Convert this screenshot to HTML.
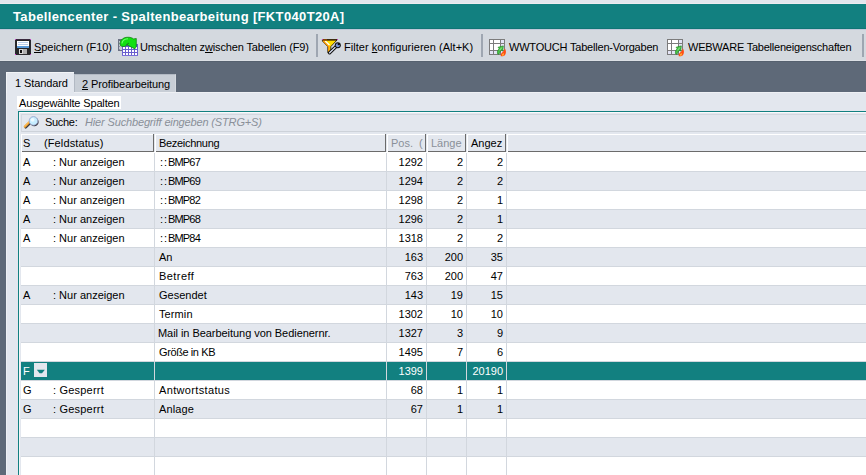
<!DOCTYPE html>
<html><head><meta charset="utf-8">
<style>
*{margin:0;padding:0;box-sizing:border-box}
html,body{width:866px;height:475px;overflow:hidden;background:#5E6978;font-family:"Liberation Sans",sans-serif;font-size:11px;color:#000}
.a{position:absolute}
.t{position:absolute;white-space:nowrap;line-height:12px;height:12px}
</style></head><body>

<div class="a" style="left:0;top:0;width:866px;height:4px;background:#E2E6ED"></div>
<div class="a" style="left:0;top:3px;width:866px;height:1px;background:#ECEBF0"></div>
<div class="a" style="left:0;top:4px;width:866px;height:25px;background:#128080"></div>
<div class="a" style="left:0;top:28px;width:866px;height:1px;background:#0F7575"></div>
<div class="t" style="left:13px;top:10px;font-size:13px;line-height:14px;height:14px;font-weight:bold;color:#fff;letter-spacing:0.35px">Tabellencenter - Spaltenbearbeitung [FKT040T20A]</div>
<div class="a" style="left:0;top:29px;width:866px;height:32px;background:#D4D9DF"></div>
<div class="a" style="left:0;top:29px;width:866px;height:1px;background:#BFC8DA"></div>
<div class="a" style="left:0;top:60px;width:866px;height:1px;background:#DCE0E5"></div>
<div class="a" style="left:0;top:61px;width:866px;height:1px;background:#56616F"></div>
<div class="a" style="left:316px;top:34px;width:2px;height:23px;background:#9EA6B1"></div>
<div class="a" style="left:481px;top:34px;width:2px;height:23px;background:#9EA6B1"></div>
<div class="a" style="left:862px;top:34px;width:2px;height:23px;background:#9EA6B1"></div>
<div class="t" style="left:34px;top:41px;letter-spacing:-0.06px"><u>S</u>peichern (F10)</div>
<div class="t" style="left:140px;top:41px;letter-spacing:-0.14px">Umschalten z<u>w</u>ischen Tabellen (F9)</div>
<div class="t" style="left:344px;top:41px;letter-spacing:0.04px">Filter <u>k</u>onfigurieren (Alt+K)</div>
<div class="t" style="left:509px;top:41px;letter-spacing:-0.2px">WWTOUCH Tabellen-Vorgaben</div>
<div class="t" style="left:688px;top:41px;letter-spacing:-0.23px">WEBWARE Tabelleneigenschaften</div>
<svg class="a" style="left:15px;top:39px" width="16" height="16" viewBox="0 0 16 16" shape-rendering="crispEdges"><rect x="0" y="0" width="16" height="16" fill="#2A2A2E"/><rect x="0" y="0" width="16" height="1" fill="#3A2A3E"/><rect x="1" y="1" width="14" height="14" fill="#262628"/><rect x="2" y="2" width="12" height="5" fill="#FFFFFF"/><rect x="3" y="3" width="10" height="1" fill="#B8CDE8"/><rect x="3" y="5" width="10" height="1" fill="#B8CDE8"/><rect x="2" y="7" width="12" height="2" fill="#5A9AD8"/><rect x="4" y="10" width="8" height="5" fill="#D8D8D8"/><rect x="8" y="10" width="4" height="5" fill="#B0B0B0"/><rect x="5" y="11" width="2" height="3" fill="#111"/><rect x="0" y="0" width="1" height="1" fill="#C040C0"/><rect x="15" y="0" width="1" height="1" fill="#C040C0"/><rect x="0" y="15" width="1" height="1" fill="#E020E0"/><rect x="15" y="15" width="1" height="1" fill="#C040C0"/></svg>
<svg class="a" style="left:116px;top:35px" width="24" height="24" viewBox="0 0 24 24" shape-rendering="crispEdges"><rect x="2" y="4" width="11" height="12" fill="#6C7284"/><rect x="3" y="6" width="9" height="9" fill="#C4C8D4"/><rect x="3" y="8" width="1" height="1" fill="#8A90A0"/><rect x="3" y="11" width="1" height="1" fill="#8A90A0"/><rect x="3" y="14" width="1" height="1" fill="#8A90A0"/><rect x="6" y="8" width="1" height="1" fill="#8A90A0"/><rect x="6" y="11" width="1" height="1" fill="#8A90A0"/><rect x="6" y="14" width="1" height="1" fill="#8A90A0"/><rect x="9" y="8" width="1" height="1" fill="#8A90A0"/><rect x="9" y="11" width="1" height="1" fill="#8A90A0"/><rect x="9" y="14" width="1" height="1" fill="#8A90A0"/><rect x="6" y="9" width="16" height="12" fill="#6A5ECF"/><rect x="6" y="20" width="16" height="1" fill="#7A70D8"/><rect x="7" y="12" width="2" height="2" fill="#FFFFFF"/><rect x="7" y="15" width="2" height="2" fill="#FFFFFF"/><rect x="7" y="18" width="2" height="2" fill="#FFFFFF"/><rect x="10" y="12" width="2" height="2" fill="#FFFFFF"/><rect x="10" y="15" width="2" height="2" fill="#FFFFFF"/><rect x="10" y="18" width="2" height="2" fill="#FFFFFF"/><rect x="13" y="12" width="2" height="2" fill="#FFFFFF"/><rect x="13" y="15" width="2" height="2" fill="#FFFFFF"/><rect x="13" y="18" width="2" height="2" fill="#FFFFFF"/><rect x="16" y="12" width="2" height="2" fill="#FFFFFF"/><rect x="16" y="15" width="2" height="2" fill="#FFFFFF"/><rect x="16" y="18" width="2" height="2" fill="#FFFFFF"/><rect x="19" y="12" width="2" height="2" fill="#FFFFFF"/><rect x="19" y="15" width="2" height="2" fill="#FFFFFF"/><rect x="19" y="18" width="2" height="2" fill="#FFFFFF"/><path d="M4.6 10.8 C3.6 9 4 5.6 6.6 3.8 C8.6 2.3 11.5 2 14 2.4 C15.6 2.7 16.8 3.2 17.6 3.9 L20.3 3.5 L20.3 11.6 L18.8 13.9 L10.9 9.8 L12.6 8.3 C11.6 8.1 10.6 8.8 10.3 10.6 C9.4 11.4 8.2 11.6 7 11.5 C5.9 11.4 5.1 11.2 4.6 10.8 Z" fill="#12E012" stroke="#0A780A" stroke-width="0.7" shape-rendering="auto"/><path d="M6 8.5 C6.2 5.8 8.5 4 12 3.8" stroke="#70FF70" stroke-width="1.1" fill="none" shape-rendering="auto"/></svg>
<svg class="a" style="left:320px;top:36px" width="24" height="22" viewBox="0 0 24 22" shape-rendering="crispEdges"><path d="M2.4 3.6 L17.4 3.6 L10.8 10.6 L10.8 15.4 L7.8 16.8 L7.8 10.6 L2.4 5 Z" fill="#FFDC00" stroke="#1A0C00" stroke-width="0.8" shape-rendering="auto"/><path d="M3.4 5 L8.8 10.6 L8.8 15.6" stroke="#FF9400" stroke-width="1.3" fill="none" shape-rendering="auto"/><path d="M5.2 5 L9.4 9" stroke="#FFFFF0" stroke-width="1.5" shape-rendering="auto"/><path d="M3 4 L17 4" stroke="#2A1400" stroke-width="1.1" shape-rendering="auto"/><path d="M3 4 L7 4" stroke="#B85A00" stroke-width="1.1" shape-rendering="auto"/><rect x="2" y="3" width="1" height="1" fill="#C040C0"/><rect x="17" y="3" width="1" height="1" fill="#C040C0"/><path d="M9.6 16.8 L16 10.6" stroke="#101010" stroke-width="3.4" stroke-linecap="round" shape-rendering="auto"/><path d="M9.6 16.8 L16 10.6" stroke="#DCE4F4" stroke-width="1.3" stroke-linecap="round" shape-rendering="auto"/><circle cx="17.8" cy="9.2" r="3" fill="#101010" shape-rendering="auto"/><circle cx="17.8" cy="9.2" r="2" fill="#7896D8" shape-rendering="auto"/><circle cx="18.8" cy="8.1" r="1.2" fill="#101010" shape-rendering="auto"/></svg>
<svg class="a" style="left:489px;top:39px" width="18" height="18" viewBox="0 0 18 18" shape-rendering="crispEdges"><rect x="0" y="0" width="16" height="16" fill="#7C7C7C"/><rect x="1" y="1" width="3" height="3" fill="#FFF"/><rect x="5" y="1" width="6" height="3" fill="#FFF"/><rect x="12" y="1" width="3" height="3" fill="#E4E4F6"/><rect x="1" y="5" width="3" height="6" fill="#FFF"/><rect x="5" y="5" width="6" height="6" fill="#FFF"/><rect x="12" y="5" width="3" height="6" fill="#E4E4F6"/><rect x="1" y="12" width="3" height="3" fill="#E4E4F6"/><rect x="5" y="12" width="6" height="3" fill="#E4E4F6"/><rect x="12" y="12" width="3" height="3" fill="#E4E4F6"/><path d="M8.6 14.8 C8.1 12.6 8.8 11 10.2 9.8 L9.1 8.3 L14.3 6.9 L13.7 12.1 L12.5 11.1 C11.5 12.2 10.6 13.4 9.9 15.2 Z" fill="#48C448" stroke="#1C861C" stroke-width="0.7" shape-rendering="auto"/><path d="M10.6 11.2 L12.8 8.6" stroke="#90F090" stroke-width="1" shape-rendering="auto"/><path d="M11.8 17.2 C11.2 15.4 12.4 13.8 13.9 12.7 C14.9 11.9 15.5 10.8 15.7 9.3 C17.1 10.9 17.4 13.6 16.3 15.6 C15.7 16.7 14.8 17.3 13.9 17.3 Z" fill="#FF4E12" shape-rendering="auto"/><path d="M12.9 16.6 C12.8 15.3 13.7 14.6 14.6 13.9 C15.1 15 14.9 16.1 14.2 16.8 Z" fill="#FFB838" shape-rendering="auto"/></svg>
<svg class="a" style="left:667px;top:39px" width="18" height="18" viewBox="0 0 18 18" shape-rendering="crispEdges"><rect x="0" y="0" width="16" height="16" fill="#7C7C7C"/><rect x="1" y="1" width="3" height="3" fill="#FFF"/><rect x="5" y="1" width="6" height="3" fill="#FFF"/><rect x="12" y="1" width="3" height="3" fill="#E4E4F6"/><rect x="1" y="5" width="3" height="6" fill="#FFF"/><rect x="5" y="5" width="6" height="6" fill="#FFF"/><rect x="12" y="5" width="3" height="6" fill="#E4E4F6"/><rect x="1" y="12" width="3" height="3" fill="#E4E4F6"/><rect x="5" y="12" width="6" height="3" fill="#E4E4F6"/><rect x="12" y="12" width="3" height="3" fill="#E4E4F6"/><path d="M8.6 14.8 C8.1 12.6 8.8 11 10.2 9.8 L9.1 8.3 L14.3 6.9 L13.7 12.1 L12.5 11.1 C11.5 12.2 10.6 13.4 9.9 15.2 Z" fill="#48C448" stroke="#1C861C" stroke-width="0.7" shape-rendering="auto"/><path d="M10.6 11.2 L12.8 8.6" stroke="#90F090" stroke-width="1" shape-rendering="auto"/><path d="M11.8 17.2 C11.2 15.4 12.4 13.8 13.9 12.7 C14.9 11.9 15.5 10.8 15.7 9.3 C17.1 10.9 17.4 13.6 16.3 15.6 C15.7 16.7 14.8 17.3 13.9 17.3 Z" fill="#FF4E12" shape-rendering="auto"/><path d="M12.9 16.6 C12.8 15.3 13.7 14.6 14.6 13.9 C15.1 15 14.9 16.1 14.2 16.8 Z" fill="#FFB838" shape-rendering="auto"/></svg>
<div class="a" style="left:6px;top:92px;width:860px;height:383px;background:#E3E7EE"></div>
<div class="a" style="left:6px;top:92px;width:860px;height:1px;background:#EEF0F4"></div>
<div class="a" style="left:6px;top:92px;width:1px;height:383px;background:#EEF0F4"></div>
<div class="a" style="left:74px;top:74px;width:102px;height:18px;background:#C8CED6;border-top:1px solid #B2B9C3;border-left:1px solid #B2B9C3;border-right:1px solid #D4D8DE"></div>
<div class="a" style="left:6px;top:72px;width:68px;height:21px;background:#E3E7EE;border-top:1px solid #F2F4F7;border-left:1px solid #F2F4F7"></div>
<div class="t" style="left:15px;top:77px;letter-spacing:-0.1px">1 Standard</div>
<div class="t" style="left:82px;top:78px;letter-spacing:-0.1px"><u>2</u> Profibearbeitung</div>
<div class="a" style="left:17px;top:96px;width:104px;height:13px;background:#fff"></div>
<div class="t" style="left:19px;top:97px;letter-spacing:-0.15px">Ausgewählte Spalten</div>
<div class="a" style="left:18px;top:111px;width:848px;height:364px;background:#E3E7EE;border-left:1px solid #128080;border-top:1px solid #128080"></div>
<div class="a" style="left:19px;top:112px;width:847px;height:1px;background:#FAFAFC"></div>
<div class="a" style="left:19px;top:112px;width:1px;height:363px;background:#F4F5F8"></div>
<div class="a" style="left:21px;top:114px;width:845px;height:18px;background:#E3E7EE;border-left:1px solid #D3D8DF;border-top:1px solid #D3D8DF;border-bottom:1px solid #CDD2D9"></div>
<div class="t" style="left:45px;top:116px;letter-spacing:-0.3px">Suche:</div>
<div class="t" style="left:85px;top:116px;letter-spacing:-0.15px;font-style:italic;color:#8A9099">Hier Suchbegriff eingeben (STRG+S)</div>
<svg class="a" style="left:23px;top:113px" width="16" height="16" viewBox="0 0 16 16" shape-rendering="crispEdges"><path d="M1.8 13.6 L6.2 9.2" stroke="#3A3A42" stroke-width="2.4" stroke-linecap="round" shape-rendering="auto" transform="translate(0.9,0.9)"/><path d="M1.8 13.6 L6.2 9.2" stroke="#F4A432" stroke-width="2.2" stroke-linecap="round" shape-rendering="auto"/><path d="M1.6 13 L5.6 9" stroke="#FFD080" stroke-width="0.8" stroke-linecap="round" shape-rendering="auto"/><circle cx="11.3" cy="8.9" r="4.3" fill="#34343C" shape-rendering="auto"/><circle cx="10.5" cy="7.9" r="4.3" fill="#C6EDFF" stroke="#9AA6CC" stroke-width="0.9" shape-rendering="auto"/><circle cx="9.6" cy="6.8" r="1.9" fill="#EEFAFF" shape-rendering="auto"/></svg>
<div class="a" style="left:21px;top:134px;width:133px;height:18px;background:#E3E7EE;border-top:1px solid #fff;border-left:1px solid #fff"></div>
<div class="a" style="left:22px;top:151px;width:132px;height:1px;background:#6B6B6B"></div>
<div class="a" style="left:153px;top:134px;width:1px;height:19px;background:#6B6B6B"></div>
<div class="a" style="left:155px;top:134px;width:231px;height:18px;background:#E3E7EE;border-top:1px solid #fff;border-left:1px solid #fff"></div>
<div class="a" style="left:156px;top:151px;width:230px;height:1px;background:#6B6B6B"></div>
<div class="a" style="left:385px;top:134px;width:1px;height:19px;background:#6B6B6B"></div>
<div class="a" style="left:387px;top:134px;width:39px;height:18px;background:#E3E7EE;border-top:1px solid #fff;border-left:1px solid #fff"></div>
<div class="a" style="left:388px;top:151px;width:38px;height:1px;background:#6B6B6B"></div>
<div class="a" style="left:425px;top:134px;width:1px;height:19px;background:#6B6B6B"></div>
<div class="a" style="left:427px;top:134px;width:39px;height:18px;background:#E3E7EE;border-top:1px solid #fff;border-left:1px solid #fff"></div>
<div class="a" style="left:428px;top:151px;width:38px;height:1px;background:#6B6B6B"></div>
<div class="a" style="left:465px;top:134px;width:1px;height:19px;background:#6B6B6B"></div>
<div class="a" style="left:467px;top:134px;width:39px;height:18px;background:#E3E7EE;border-top:1px solid #fff;border-left:1px solid #fff"></div>
<div class="a" style="left:468px;top:151px;width:38px;height:1px;background:#6B6B6B"></div>
<div class="a" style="left:505px;top:134px;width:1px;height:19px;background:#6B6B6B"></div>
<div class="a" style="left:507px;top:134px;width:359px;height:18px;background:#E3E7EE;border-top:1px solid #fff;border-left:1px solid #fff"></div>
<div class="a" style="left:508px;top:151px;width:358px;height:1px;background:#6B6B6B"></div>
<div class="t" style="left:23px;top:137px">S</div>
<div class="t" style="left:44px;top:137px;letter-spacing:0.12px">(Feldstatus)</div>
<div class="t" style="left:159px;top:137px;letter-spacing:-0.3px">Bezeichnung</div>
<div class="t" style="left:391px;top:137px;color:#8A9099;width:32px;overflow:hidden">Pos.&nbsp;&nbsp;(Byte)</div>
<div class="t" style="left:431px;top:137px;color:#8A9099">Länge</div>
<div class="t" style="left:471px;top:137px">Angez</div>
<div class="a" style="left:21px;top:152px;width:845px;height:19px;background:#D2D7DE"></div>
<div class="a" style="left:21px;top:152px;width:845px;height:1px;background:#FFFFFF"></div>
<div class="a" style="left:21px;top:153px;width:133px;height:18px;background:#FFFFFF"></div>
<div class="a" style="left:155px;top:153px;width:231px;height:18px;background:#FFFFFF"></div>
<div class="a" style="left:387px;top:153px;width:39px;height:18px;background:#FFFFFF"></div>
<div class="a" style="left:427px;top:153px;width:39px;height:18px;background:#FFFFFF"></div>
<div class="a" style="left:467px;top:153px;width:39px;height:18px;background:#FFFFFF"></div>
<div class="a" style="left:507px;top:153px;width:359px;height:18px;background:#FFFFFF"></div>
<div class="t" style="left:23px;top:156px">A</div>
<div class="t" style="left:53px;top:156px;letter-spacing:0px">: Nur anzeigen</div>
<div class="t" style="left:160px;top:156px;letter-spacing:-0.1px"><span style="letter-spacing:0.9px">::</span><span style="letter-spacing:-0.8px">BMP67</span></div>
<div class="t" style="left:423px;top:156px;transform:translateX(-100%)">1292</div>
<div class="t" style="left:463px;top:156px;transform:translateX(-100%)">2</div>
<div class="t" style="left:503px;top:156px;transform:translateX(-100%)">2</div>
<div class="a" style="left:21px;top:171px;width:845px;height:19px;background:#D2D7DE"></div>
<div class="a" style="left:21px;top:172px;width:133px;height:18px;background:#E3E7EE"></div>
<div class="a" style="left:155px;top:172px;width:231px;height:18px;background:#E3E7EE"></div>
<div class="a" style="left:387px;top:172px;width:39px;height:18px;background:#E3E7EE"></div>
<div class="a" style="left:427px;top:172px;width:39px;height:18px;background:#E3E7EE"></div>
<div class="a" style="left:467px;top:172px;width:39px;height:18px;background:#E3E7EE"></div>
<div class="a" style="left:507px;top:172px;width:359px;height:18px;background:#E3E7EE"></div>
<div class="t" style="left:23px;top:175px">A</div>
<div class="t" style="left:53px;top:175px;letter-spacing:0px">: Nur anzeigen</div>
<div class="t" style="left:160px;top:175px;letter-spacing:-0.1px"><span style="letter-spacing:0.9px">::</span><span style="letter-spacing:-0.8px">BMP69</span></div>
<div class="t" style="left:423px;top:175px;transform:translateX(-100%)">1294</div>
<div class="t" style="left:463px;top:175px;transform:translateX(-100%)">2</div>
<div class="t" style="left:503px;top:175px;transform:translateX(-100%)">2</div>
<div class="a" style="left:21px;top:190px;width:845px;height:19px;background:#D2D7DE"></div>
<div class="a" style="left:21px;top:191px;width:133px;height:18px;background:#FFFFFF"></div>
<div class="a" style="left:155px;top:191px;width:231px;height:18px;background:#FFFFFF"></div>
<div class="a" style="left:387px;top:191px;width:39px;height:18px;background:#FFFFFF"></div>
<div class="a" style="left:427px;top:191px;width:39px;height:18px;background:#FFFFFF"></div>
<div class="a" style="left:467px;top:191px;width:39px;height:18px;background:#FFFFFF"></div>
<div class="a" style="left:507px;top:191px;width:359px;height:18px;background:#FFFFFF"></div>
<div class="t" style="left:23px;top:194px">A</div>
<div class="t" style="left:53px;top:194px;letter-spacing:0px">: Nur anzeigen</div>
<div class="t" style="left:160px;top:194px;letter-spacing:-0.1px"><span style="letter-spacing:0.9px">::</span><span style="letter-spacing:-0.8px">BMP82</span></div>
<div class="t" style="left:423px;top:194px;transform:translateX(-100%)">1298</div>
<div class="t" style="left:463px;top:194px;transform:translateX(-100%)">2</div>
<div class="t" style="left:503px;top:194px;transform:translateX(-100%)">1</div>
<div class="a" style="left:21px;top:209px;width:845px;height:19px;background:#D2D7DE"></div>
<div class="a" style="left:21px;top:210px;width:133px;height:18px;background:#E3E7EE"></div>
<div class="a" style="left:155px;top:210px;width:231px;height:18px;background:#E3E7EE"></div>
<div class="a" style="left:387px;top:210px;width:39px;height:18px;background:#E3E7EE"></div>
<div class="a" style="left:427px;top:210px;width:39px;height:18px;background:#E3E7EE"></div>
<div class="a" style="left:467px;top:210px;width:39px;height:18px;background:#E3E7EE"></div>
<div class="a" style="left:507px;top:210px;width:359px;height:18px;background:#E3E7EE"></div>
<div class="t" style="left:23px;top:213px">A</div>
<div class="t" style="left:53px;top:213px;letter-spacing:0px">: Nur anzeigen</div>
<div class="t" style="left:160px;top:213px;letter-spacing:-0.1px"><span style="letter-spacing:0.9px">::</span><span style="letter-spacing:-0.8px">BMP68</span></div>
<div class="t" style="left:423px;top:213px;transform:translateX(-100%)">1296</div>
<div class="t" style="left:463px;top:213px;transform:translateX(-100%)">2</div>
<div class="t" style="left:503px;top:213px;transform:translateX(-100%)">1</div>
<div class="a" style="left:21px;top:228px;width:845px;height:19px;background:#D2D7DE"></div>
<div class="a" style="left:21px;top:229px;width:133px;height:18px;background:#FFFFFF"></div>
<div class="a" style="left:155px;top:229px;width:231px;height:18px;background:#FFFFFF"></div>
<div class="a" style="left:387px;top:229px;width:39px;height:18px;background:#FFFFFF"></div>
<div class="a" style="left:427px;top:229px;width:39px;height:18px;background:#FFFFFF"></div>
<div class="a" style="left:467px;top:229px;width:39px;height:18px;background:#FFFFFF"></div>
<div class="a" style="left:507px;top:229px;width:359px;height:18px;background:#FFFFFF"></div>
<div class="t" style="left:23px;top:232px">A</div>
<div class="t" style="left:53px;top:232px;letter-spacing:0px">: Nur anzeigen</div>
<div class="t" style="left:160px;top:232px;letter-spacing:-0.1px"><span style="letter-spacing:0.9px">::</span><span style="letter-spacing:-0.8px">BMP84</span></div>
<div class="t" style="left:423px;top:232px;transform:translateX(-100%)">1318</div>
<div class="t" style="left:463px;top:232px;transform:translateX(-100%)">2</div>
<div class="t" style="left:503px;top:232px;transform:translateX(-100%)">2</div>
<div class="a" style="left:21px;top:247px;width:845px;height:19px;background:#D2D7DE"></div>
<div class="a" style="left:21px;top:248px;width:133px;height:18px;background:#E3E7EE"></div>
<div class="a" style="left:155px;top:248px;width:231px;height:18px;background:#E3E7EE"></div>
<div class="a" style="left:387px;top:248px;width:39px;height:18px;background:#E3E7EE"></div>
<div class="a" style="left:427px;top:248px;width:39px;height:18px;background:#E3E7EE"></div>
<div class="a" style="left:467px;top:248px;width:39px;height:18px;background:#E3E7EE"></div>
<div class="a" style="left:507px;top:248px;width:359px;height:18px;background:#E3E7EE"></div>
<div class="t" style="left:159px;top:251px;letter-spacing:0px">An</div>
<div class="t" style="left:423px;top:251px;transform:translateX(-100%)">163</div>
<div class="t" style="left:463px;top:251px;transform:translateX(-100%)">200</div>
<div class="t" style="left:503px;top:251px;transform:translateX(-100%)">35</div>
<div class="a" style="left:21px;top:266px;width:845px;height:19px;background:#D2D7DE"></div>
<div class="a" style="left:21px;top:267px;width:133px;height:18px;background:#FFFFFF"></div>
<div class="a" style="left:155px;top:267px;width:231px;height:18px;background:#FFFFFF"></div>
<div class="a" style="left:387px;top:267px;width:39px;height:18px;background:#FFFFFF"></div>
<div class="a" style="left:427px;top:267px;width:39px;height:18px;background:#FFFFFF"></div>
<div class="a" style="left:467px;top:267px;width:39px;height:18px;background:#FFFFFF"></div>
<div class="a" style="left:507px;top:267px;width:359px;height:18px;background:#FFFFFF"></div>
<div class="t" style="left:159px;top:270px;letter-spacing:0.45px">Betreff</div>
<div class="t" style="left:423px;top:270px;transform:translateX(-100%)">763</div>
<div class="t" style="left:463px;top:270px;transform:translateX(-100%)">200</div>
<div class="t" style="left:503px;top:270px;transform:translateX(-100%)">47</div>
<div class="a" style="left:21px;top:285px;width:845px;height:19px;background:#D2D7DE"></div>
<div class="a" style="left:21px;top:286px;width:133px;height:18px;background:#E3E7EE"></div>
<div class="a" style="left:155px;top:286px;width:231px;height:18px;background:#E3E7EE"></div>
<div class="a" style="left:387px;top:286px;width:39px;height:18px;background:#E3E7EE"></div>
<div class="a" style="left:427px;top:286px;width:39px;height:18px;background:#E3E7EE"></div>
<div class="a" style="left:467px;top:286px;width:39px;height:18px;background:#E3E7EE"></div>
<div class="a" style="left:507px;top:286px;width:359px;height:18px;background:#E3E7EE"></div>
<div class="t" style="left:23px;top:289px">A</div>
<div class="t" style="left:53px;top:289px;letter-spacing:0px">: Nur anzeigen</div>
<div class="t" style="left:159px;top:289px;letter-spacing:0px">Gesendet</div>
<div class="t" style="left:423px;top:289px;transform:translateX(-100%)">143</div>
<div class="t" style="left:463px;top:289px;transform:translateX(-100%)">19</div>
<div class="t" style="left:503px;top:289px;transform:translateX(-100%)">15</div>
<div class="a" style="left:21px;top:304px;width:845px;height:19px;background:#D2D7DE"></div>
<div class="a" style="left:21px;top:305px;width:133px;height:18px;background:#FFFFFF"></div>
<div class="a" style="left:155px;top:305px;width:231px;height:18px;background:#FFFFFF"></div>
<div class="a" style="left:387px;top:305px;width:39px;height:18px;background:#FFFFFF"></div>
<div class="a" style="left:427px;top:305px;width:39px;height:18px;background:#FFFFFF"></div>
<div class="a" style="left:467px;top:305px;width:39px;height:18px;background:#FFFFFF"></div>
<div class="a" style="left:507px;top:305px;width:359px;height:18px;background:#FFFFFF"></div>
<div class="t" style="left:159px;top:308px;letter-spacing:0.1px">Termin</div>
<div class="t" style="left:423px;top:308px;transform:translateX(-100%)">1302</div>
<div class="t" style="left:463px;top:308px;transform:translateX(-100%)">10</div>
<div class="t" style="left:503px;top:308px;transform:translateX(-100%)">10</div>
<div class="a" style="left:21px;top:323px;width:845px;height:19px;background:#D2D7DE"></div>
<div class="a" style="left:21px;top:324px;width:133px;height:18px;background:#E3E7EE"></div>
<div class="a" style="left:155px;top:324px;width:231px;height:18px;background:#E3E7EE"></div>
<div class="a" style="left:387px;top:324px;width:39px;height:18px;background:#E3E7EE"></div>
<div class="a" style="left:427px;top:324px;width:39px;height:18px;background:#E3E7EE"></div>
<div class="a" style="left:467px;top:324px;width:39px;height:18px;background:#E3E7EE"></div>
<div class="a" style="left:507px;top:324px;width:359px;height:18px;background:#E3E7EE"></div>
<div class="t" style="left:158px;top:327px;letter-spacing:-0.05px">Mail in Bearbeitung von Bedienernr.</div>
<div class="t" style="left:423px;top:327px;transform:translateX(-100%)">1327</div>
<div class="t" style="left:463px;top:327px;transform:translateX(-100%)">3</div>
<div class="t" style="left:503px;top:327px;transform:translateX(-100%)">9</div>
<div class="a" style="left:21px;top:342px;width:845px;height:19px;background:#D2D7DE"></div>
<div class="a" style="left:21px;top:343px;width:133px;height:18px;background:#FFFFFF"></div>
<div class="a" style="left:155px;top:343px;width:231px;height:18px;background:#FFFFFF"></div>
<div class="a" style="left:387px;top:343px;width:39px;height:18px;background:#FFFFFF"></div>
<div class="a" style="left:427px;top:343px;width:39px;height:18px;background:#FFFFFF"></div>
<div class="a" style="left:467px;top:343px;width:39px;height:18px;background:#FFFFFF"></div>
<div class="a" style="left:507px;top:343px;width:359px;height:18px;background:#FFFFFF"></div>
<div class="t" style="left:159px;top:346px;letter-spacing:-0.4px">Größe in KB</div>
<div class="t" style="left:423px;top:346px;transform:translateX(-100%)">1495</div>
<div class="t" style="left:463px;top:346px;transform:translateX(-100%)">7</div>
<div class="t" style="left:503px;top:346px;transform:translateX(-100%)">6</div>
<div class="a" style="left:21px;top:361px;width:845px;height:19px;background:#D2D7DE"></div>
<div class="a" style="left:21px;top:362px;width:133px;height:18px;background:#128080"></div>
<div class="a" style="left:155px;top:362px;width:231px;height:18px;background:#128080"></div>
<div class="a" style="left:387px;top:362px;width:39px;height:18px;background:#128080"></div>
<div class="a" style="left:427px;top:362px;width:39px;height:18px;background:#128080"></div>
<div class="a" style="left:467px;top:362px;width:39px;height:18px;background:#128080"></div>
<div class="a" style="left:507px;top:362px;width:359px;height:18px;background:#128080"></div>
<div class="t" style="left:23px;top:365px;color:#fff">F</div>
<div class="a" style="left:34px;top:363px;width:13px;height:14px;background:#E3E7EE"></div>
<svg class="a" style="left:36px;top:369px" width="10" height="6" viewBox="0 0 10 6"><path d="M0.8 0.8 L8.8 0.8 L6 4.2 L3.6 4.2 Z" fill="#128080"/></svg>
<div class="t" style="left:423px;top:365px;color:#fff;transform:translateX(-100%)">1399</div>
<div class="t" style="left:503px;top:365px;color:#fff;transform:translateX(-100%)">20190</div>
<div class="a" style="left:21px;top:380px;width:845px;height:19px;background:#D2D7DE"></div>
<div class="a" style="left:21px;top:381px;width:133px;height:18px;background:#FFFFFF"></div>
<div class="a" style="left:155px;top:381px;width:231px;height:18px;background:#FFFFFF"></div>
<div class="a" style="left:387px;top:381px;width:39px;height:18px;background:#FFFFFF"></div>
<div class="a" style="left:427px;top:381px;width:39px;height:18px;background:#FFFFFF"></div>
<div class="a" style="left:467px;top:381px;width:39px;height:18px;background:#FFFFFF"></div>
<div class="a" style="left:507px;top:381px;width:359px;height:18px;background:#FFFFFF"></div>
<div class="t" style="left:23px;top:384px">G</div>
<div class="t" style="left:53px;top:384px;letter-spacing:0.2px">: Gesperrt</div>
<div class="t" style="left:159px;top:384px;letter-spacing:0.35px">Antwortstatus</div>
<div class="t" style="left:423px;top:384px;transform:translateX(-100%)">68</div>
<div class="t" style="left:463px;top:384px;transform:translateX(-100%)">1</div>
<div class="t" style="left:503px;top:384px;transform:translateX(-100%)">1</div>
<div class="a" style="left:21px;top:399px;width:845px;height:19px;background:#D2D7DE"></div>
<div class="a" style="left:21px;top:400px;width:133px;height:18px;background:#E3E7EE"></div>
<div class="a" style="left:155px;top:400px;width:231px;height:18px;background:#E3E7EE"></div>
<div class="a" style="left:387px;top:400px;width:39px;height:18px;background:#E3E7EE"></div>
<div class="a" style="left:427px;top:400px;width:39px;height:18px;background:#E3E7EE"></div>
<div class="a" style="left:467px;top:400px;width:39px;height:18px;background:#E3E7EE"></div>
<div class="a" style="left:507px;top:400px;width:359px;height:18px;background:#E3E7EE"></div>
<div class="t" style="left:23px;top:403px">G</div>
<div class="t" style="left:53px;top:403px;letter-spacing:0.2px">: Gesperrt</div>
<div class="t" style="left:159px;top:403px;letter-spacing:0.1px">Anlage</div>
<div class="t" style="left:423px;top:403px;transform:translateX(-100%)">67</div>
<div class="t" style="left:463px;top:403px;transform:translateX(-100%)">1</div>
<div class="t" style="left:503px;top:403px;transform:translateX(-100%)">1</div>
<div class="a" style="left:21px;top:418px;width:845px;height:19px;background:#D2D7DE"></div>
<div class="a" style="left:21px;top:419px;width:133px;height:18px;background:#FFFFFF"></div>
<div class="a" style="left:155px;top:419px;width:231px;height:18px;background:#FFFFFF"></div>
<div class="a" style="left:387px;top:419px;width:39px;height:18px;background:#FFFFFF"></div>
<div class="a" style="left:427px;top:419px;width:39px;height:18px;background:#FFFFFF"></div>
<div class="a" style="left:467px;top:419px;width:39px;height:18px;background:#FFFFFF"></div>
<div class="a" style="left:507px;top:419px;width:359px;height:18px;background:#FFFFFF"></div>
<div class="a" style="left:21px;top:437px;width:845px;height:19px;background:#D2D7DE"></div>
<div class="a" style="left:21px;top:438px;width:133px;height:18px;background:#E3E7EE"></div>
<div class="a" style="left:155px;top:438px;width:231px;height:18px;background:#E3E7EE"></div>
<div class="a" style="left:387px;top:438px;width:39px;height:18px;background:#E3E7EE"></div>
<div class="a" style="left:427px;top:438px;width:39px;height:18px;background:#E3E7EE"></div>
<div class="a" style="left:467px;top:438px;width:39px;height:18px;background:#E3E7EE"></div>
<div class="a" style="left:507px;top:438px;width:359px;height:18px;background:#E3E7EE"></div>
<div class="a" style="left:21px;top:456px;width:845px;height:19px;background:#D2D7DE"></div>
<div class="a" style="left:21px;top:457px;width:133px;height:18px;background:#FFFFFF"></div>
<div class="a" style="left:155px;top:457px;width:231px;height:18px;background:#FFFFFF"></div>
<div class="a" style="left:387px;top:457px;width:39px;height:18px;background:#FFFFFF"></div>
<div class="a" style="left:427px;top:457px;width:39px;height:18px;background:#FFFFFF"></div>
<div class="a" style="left:467px;top:457px;width:39px;height:18px;background:#FFFFFF"></div>
<div class="a" style="left:507px;top:457px;width:359px;height:18px;background:#FFFFFF"></div>
</body></html>
